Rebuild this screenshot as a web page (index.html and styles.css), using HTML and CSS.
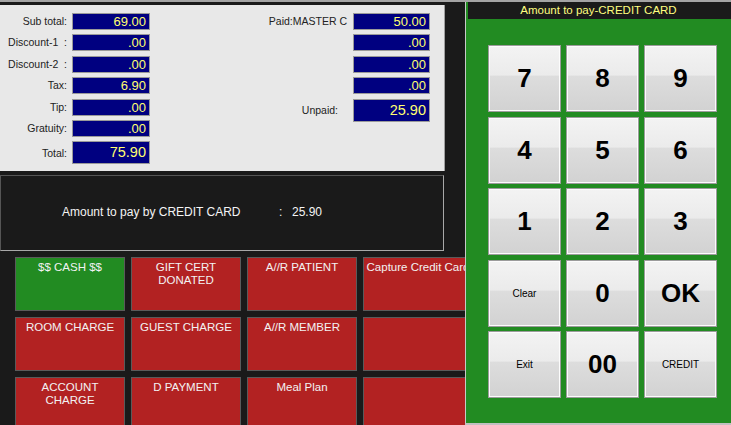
FILE: index.html
```html
<!DOCTYPE html>
<html>
<head>
  <title>Tender - Credit Card</title>
  <link rel="stylesheet" href="styles.css">
</head>
<body>

<div class="screen">
  <div class="left">
    <div class="totals">
      <div class="col col-left">
        <div class="lbl">Sub total:</div><div class="val">69.00</div>
        <div class="lbl">Discount-1&nbsp;&nbsp;:</div><div class="val">.00</div>
        <div class="lbl">Discount-2&nbsp;&nbsp;:</div><div class="val">.00</div>
        <div class="lbl">Tax:</div><div class="val">6.90</div>
        <div class="lbl">Tip:</div><div class="val">.00</div>
        <div class="lbl">Gratuity:</div><div class="val">.00</div>
        <div class="lbl mid">Total:</div><div class="val big">75.90</div>
      </div>
      <div class="col col-right">
        <div class="lbl">Paid:MASTER C</div><div class="val">50.00</div>
        <div class="lbl"></div><div class="val">.00</div>
        <div class="lbl"></div><div class="val">.00</div>
        <div class="lbl"></div><div class="val">.00</div>
        <div class="lbl mid unpaid">Unpaid:</div><div class="val big">25.90</div>
      </div>
    </div>

    <div class="info">
      <span class="info-label">Amount to pay by CREDIT CARD</span>
      <span class="info-colon">:</span>
      <span>25.90</span>
    </div>

    <div class="tenders">
      <div class="tender green">$$ CASH $$</div>
      <div class="tender">GIFT CERT<br>DONATED</div>
      <div class="tender">A//R PATIENT</div>
      <div class="tender">Capture Credit Card</div>
      <div class="tender">ROOM CHARGE</div>
      <div class="tender">GUEST CHARGE</div>
      <div class="tender">A//R MEMBER</div>
      <div class="tender"></div>
      <div class="tender">ACCOUNT<br>CHARGE</div>
      <div class="tender">D PAYMENT</div>
      <div class="tender">Meal Plan</div>
      <div class="tender"></div>
    </div>
  </div>

  <div class="right">
    <div class="title">Amount to pay-CREDIT CARD</div>
    <div class="keypad">
      <button class="key">7</button>
      <button class="key">8</button>
      <button class="key">9</button>
      <button class="key">4</button>
      <button class="key">5</button>
      <button class="key">6</button>
      <button class="key">1</button>
      <button class="key">2</button>
      <button class="key">3</button>
      <button class="key small">Clear</button>
      <button class="key">0</button>
      <button class="key">OK</button>
      <button class="key small">Exit</button>
      <button class="key">00</button>
      <button class="key small">CREDIT</button>
    </div>
  </div>
</div>

</body>
</html>
```

FILE: styles.css
```css
* {
  box-sizing: border-box;
  font-family: "Liberation Sans", Arial, sans-serif;
}

body {
  margin: 0;
  padding: 0;
  background: #1a1a1a;
  overflow: hidden;
}

.screen {
  display: flex;
  width: 731px;
  height: 425px;
  border-top: 2px solid #a4a4a4;
  overflow: hidden;
}

.left {
  width: 465px;
  flex: none;
  padding-top: 3px;
  overflow: hidden;
}

/* totals panel */
.totals {
  width: 445px;
  height: 166px;
  background: #e8e8e8;
  border-right: 1px solid #a0a0a0;
  display: flex;
  padding-top: 8px;
}

.col {
  display: grid;
  grid-auto-rows: 17px;
  row-gap: 4.4px;
  column-gap: 5px;
  align-content: start;
}

.col-left {
  grid-template-columns: 67px 78px;
  grid-template-rows: repeat(6, 17px) 23px;
}

.col-right {
  grid-template-columns: 120px 77px;
  grid-template-rows: repeat(4, 17px) 23px;
  column-gap: 6px;
  margin-left: 77px;
}

.lbl {
  font-size: 10.5px;
  color: #222;
  text-align: right;
  white-space: nowrap;
  padding-top: 2px;
}

.lbl.mid {
  padding-top: 0;
  align-self: center;
}

.lbl.unpaid {
  padding-right: 9px;
}

.val {
  background: #000080;
  border: 1px solid #9a9a9a;
  color: #ffff70;
  font-size: 13px;
  line-height: 15px;
  text-align: right;
  padding-right: 3px;
}

.val.big {
  font-size: 14.5px;
  line-height: 21px;
}

/* amount line */
.info {
  width: 444px;
  height: 76px;
  margin-top: 4px;
  border: 1px solid #555;
  border-right-color: #a8a8a8;
  border-bottom-color: #a8a8a8;
  display: flex;
  align-items: center;
  padding-left: 61px;
  padding-bottom: 3px;
  color: #f4f4f4;
  font-size: 12px;
}

.info-label {
  width: 217px;
}

.info-colon {
  width: 13px;
}

/* tender buttons */
.tenders {
  display: grid;
  grid-template-columns: repeat(4, 110px);
  grid-auto-rows: 54px;
  gap: 6px;
  margin-top: 6px;
  padding-left: 15px;
  width: 480px;
}

.tender {
  background: #b22222;
  border: 1px solid #5a5a5a;
  color: #f2f2f2;
  font-size: 11.5px;
  line-height: 13px;
  text-align: center;
  padding-top: 3px;
  white-space: nowrap;
  overflow: hidden;
}

.tender.green {
  background: #228b22;
}

/* keypad panel */
.right {
  flex: 1;
  height: 423px;
  background: #228b22;
  border-left: 1px solid #c8c8c8;
  border-bottom: 2px solid #c0c0c0;
}

.title {
  height: 17px;
  margin-left: 2px;
  background: #1a1a1a;
  color: #ffff80;
  font-size: 11.5px;
  line-height: 17px;
  text-align: center;
  padding-right: 2px;
}

.keypad {
  display: grid;
  grid-template-columns: repeat(3, 73px);
  grid-template-rows: repeat(5, 67px);
  column-gap: 5px;
  row-gap: 4.5px;
  margin-top: 26px;
  padding-left: 22px;
}

.key {
  margin: 0;
  padding: 0;
  border: 1px solid #9c9c9c;
  box-shadow: inset 0 0 0 1px #fcfcfc;
  background: linear-gradient(#f3f3f3 0%, #ebebeb 45%, #dddddd 46%, #d2d2d2 100%);
  color: #000;
  font-size: 26px;
  font-weight: bold;
}

.key.small {
  font-size: 10px;
  font-weight: normal;
}
```
